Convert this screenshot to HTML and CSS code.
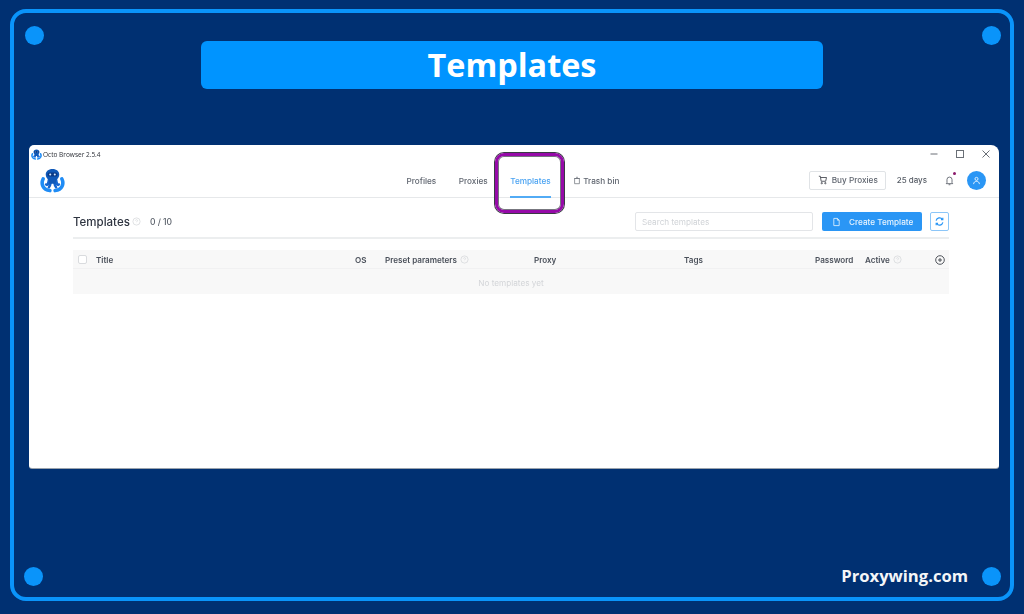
FILE: index.html
```html
<!DOCTYPE html>
<html lang="en">
<head>
<meta charset="utf-8">
<title>Templates</title>
<link rel="stylesheet" href="styles.css">
</head>
<body>
<div class="frame">
  <span class="dot dot-tl"></span><span class="dot dot-tr"></span><span class="dot dot-bl"></span><span class="dot dot-br"></span>
  <h1 class="banner">Templates</h1>
  <div class="window">
    <div class="titlebar">
      <svg class="mini-logo" viewBox="0 0 24 24"><use href="#octo"/></svg>
      <span class="app-name">Octo Browser 2.5.4</span>
      <div class="win-controls">
        <svg viewBox="0 0 10 10"><path d="M1.500 5h7" /></svg>
        <svg viewBox="0 0 10 10"><rect x="1.500" y="1.500" width="7" height="7"/></svg>
        <svg viewBox="0 0 10 10"><path d="M1.500 1.500l7 7M8.500 1.500l-7 7"/></svg>
      </div>
    </div>
    <header class="appbar">
      <div class="logo-cell">
        <svg class="logo" viewBox="0 0 24 24">
          <defs>
            <g id="octo" fill="none" stroke-linecap="round">
              <path stroke="#1f8cf5" stroke-width="3.400" d="M3 10.500C.8 15 2.500 21 9.500 21.700M21 10.500C23.200 15 21.500 21 14.500 21.700"/>
              <path stroke="#1565cf" stroke-width="2.400" d="M8.500 11.500C8 15.500 7 17 5.800 15.800M15.500 11.500C16 15.500 17 17 18.200 15.800M10.500 13C10 16 9.500 17.500 8.500 18.500M13.500 13C14 16 14.500 17.500 15.500 18.500"/>
              <path fill="#1059b8" d="M12 1c3.900 0 6.500 2.300 6.500 5.300 0 2.500-1.400 4.200-3 5.200L15 15H9l-.5-3.500C6.900 10.500 5.500 8.800 5.500 6.300 5.500 3.300 8.100 1 12 1z"/>
              <rect fill="#0a3a86" x="7.200" y="4.400" width="9.600" height="3.800" rx="1.700"/>
              <circle fill="#d8ebff" cx="9.800" cy="6.300" r="1"/>
              <circle fill="#d8ebff" cx="14.200" cy="6.300" r="1"/>
            </g>
          </defs>
          <use href="#octo"/>
        </svg>
      </div>
      <nav class="tabs">
        <a class="tab">Profiles</a>
        <a class="tab">Proxies</a>
        <a class="tab tab-active">Templates</a>
        <a class="tab tab-icon">
          <svg class="ico-trash" viewBox="0 0 10 10"><path d="M2 2.500h6V9H2zM1.500 2.500h7M3.800 1h2.400"/></svg>
          Trash bin
        </a>
      </nav>
      <div class="account">
        <button class="btn-outline">
          <svg class="ico-cart" viewBox="0 0 12 12"><path d="M1 1.500h1.800l1 6h5.400l1-4.500H3.200"/><circle cx="4.500" cy="9.800" r=".8"/><circle cx="8.800" cy="9.800" r=".8"/></svg>
          Buy Proxies
        </button>
        <span class="days">25 days</span>
        <span class="bell">
          <svg viewBox="0 0 10 12"><path d="M2.200 8.500V5a2.800 2.800 0 0 1 5.600 0v3.500l.8 1H1.400zM4 10.700h2"/></svg>
          <i class="bell-dot"></i>
        </span>
        <span class="avatar">
          <svg viewBox="0 0 10 10"><circle cx="5" cy="3.200" r="1.700"/><path d="M1.800 9c0-2 1.400-3 3.200-3s3.200 1 3.200 3"/></svg>
        </span>
      </div>
    </header>
    <main class="content">
      <div class="toolbar">
        <h2 class="page-title">Templates</h2>
        <svg class="ico-help ico-help-title" viewBox="0 0 10 10"><circle cx="5" cy="5" r="4"/><path d="M3.800 4c.2-1.400 2.400-1.300 2.400 0 0 .9-1.200.9-1.200 1.800M5 7.200v.1"/></svg>
        <span class="count">0 / 10</span>
        <div class="search">Search templates</div>
        <button class="btn-primary">
          <svg class="ico-doc" viewBox="0 0 10 10"><path d="M2 1h4l2 2v6H2zM6 1v2h2"/></svg>
          Create Template
        </button>
        <button class="btn-refresh">
          <svg viewBox="0 0 12 12"><path d="M2.300 5a3.900 3.900 0 0 1 6.900-1.400M9.700 7a3.900 3.900 0 0 1-6.900 1.400"/><path d="M9.600 1.900v2H7.600M2.400 10.100v-2h2"/></svg>
        </button>
      </div>
      <div class="table">
        <div class="thead">
          <span class="checkbox"></span>
          <span>Title</span>
          <span>OS</span>
          <span class="th-help">Preset parameters
            <svg class="ico-help" viewBox="0 0 10 10"><circle cx="5" cy="5" r="4"/><path d="M3.800 4c.2-1.400 2.400-1.300 2.400 0 0 .9-1.200.9-1.200 1.800M5 7.200v.1"/></svg>
          </span>
          <span>Proxy</span>
          <span>Tags</span>
          <span>Password</span>
          <span class="th-help">Active
            <svg class="ico-help" viewBox="0 0 10 10"><circle cx="5" cy="5" r="4"/><path d="M3.800 4c.2-1.400 2.400-1.300 2.400 0 0 .9-1.200.9-1.200 1.800M5 7.200v.1"/></svg>
          </span>
          <svg class="ico-plus" viewBox="0 0 10 10"><circle cx="5" cy="5" r="4.300"/><path d="M3 5h4M5 3v4"/></svg>
        </div>
        <div class="empty">No templates yet</div>
      </div>
    </main>
    <span class="highlight"></span>
  </div>
  <div class="brand">Proxywing.com</div>
</div>
</body>
</html>
```

FILE: styles.css
```css
* { box-sizing: border-box; }
html, body { margin: 0; height: 100%; }
body {
  background: #003072;
  padding: 9px 10px 0;
  overflow: hidden;
  font-family: Inter, "Liberation Sans", sans-serif;
}
svg { display: block; }

.frame {
  position: relative;
  height: 592px;
  border: 4px solid #0a94fa;
  border-radius: 16px;
  padding: 28px 15px 0;
}
.dot {
  position: absolute;
  width: 19px;
  height: 19px;
  border-radius: 50%;
  background: #0a94fa;
}
.dot-tl { left: 11px; top: 13px; }
.dot-tr { right: 9px; top: 13px; }
.dot-bl { left: 10px; bottom: 11px; }
.dot-br { right: 9px; bottom: 11px; }

.banner {
  width: 622px;
  height: 48px;
  margin: 0 0 56px 172px;
  border-radius: 6px;
  background: #0094ff;
  color: #fff;
  font: 700 32.400px/47px "Open Sans", sans-serif;
  text-align: center;
}

.window {
  position: relative;
  width: 970px;
  height: 323px;
  background: #fff;
  border-radius: 5px 8px 3px 3px;
  box-shadow: 0 1px 0 #9aa3ad;
  filter: blur(.3px);
}
.titlebar {
  display: flex;
  align-items: center;
  height: 18px;
  padding: 0 8px 0 2px;
}
.mini-logo { width: 11px; height: 11px; }
.app-name {
  margin-left: 1px;
  font: 400 6.500px "Open Sans", sans-serif;
  color: #2c2f36;
}
.win-controls {
  display: flex;
  gap: 16px;
  margin-left: auto;
}
.win-controls svg {
  width: 10px;
  height: 10px;
  fill: none;
  stroke: #6a6f76;
  stroke-width: 1;
}

.appbar {
  display: grid;
  grid-template-columns: 1fr auto 1fr;
  align-items: stretch;
  height: 35px;
  border-bottom: 1px solid #e6e8ea;
}
.logo-cell { display: flex; align-items: center; padding-left: 11px; }
.logo { width: 25px; height: 25px; }
.tabs { display: flex; gap: 22.500px; margin-right: 2px; }
.tab {
  display: flex;
  align-items: center;
  gap: 2px;
  padding-top: 2px;
  font-size: 8.200px;
  font-weight: 500;
  color: #5f656f;
  border-bottom: 1px solid transparent;
}
.tab-active {
  color: #4aa3f2;
  border-bottom: 2px solid #52abf5;
  margin-bottom: -1px;
}
.ico-trash {
  width: 8px;
  height: 9px;
  fill: none;
  stroke: #6a7078;
  stroke-width: .9;
}
.account {
  display: flex;
  align-items: center;
  justify-content: flex-end;
  padding-right: 13px;
}
.btn-outline {
  display: flex;
  align-items: center;
  gap: 4px;
  width: 77px;
  height: 19px;
  padding: 0 0 0 8px;
  background: #fff;
  border: 1px solid #e0e3e6;
  border-radius: 2px;
  font: 500 8.200px Inter, sans-serif;
  color: #5f656f;
}
.ico-cart {
  width: 10px;
  height: 10px;
  fill: none;
  stroke: #3c4048;
  stroke-width: 1;
}
.days {
  margin-left: 11px;
  font-size: 8px;
  font-weight: 500;
  color: #565c65;
}
.bell {
  position: relative;
  width: 9px;
  margin-left: 18px;
}
.bell svg {
  width: 9px;
  height: 11px;
  fill: none;
  stroke: #50565f;
  stroke-width: .9;
}
.bell-dot {
  position: absolute;
  right: -2px;
  top: -3px;
  width: 3px;
  height: 3px;
  border-radius: 50%;
  background: #8b1a6b;
}
.avatar {
  display: flex;
  align-items: center;
  justify-content: center;
  width: 19px;
  height: 19px;
  margin-left: 13px;
  border-radius: 50%;
  background: #2a96f5;
}
.avatar svg {
  width: 9px;
  height: 9px;
  fill: none;
  stroke: #fff;
  stroke-width: .9;
}

.content { padding: 12px 50px 0 44px; }
.toolbar {
  display: flex;
  align-items: center;
  height: 29px;
  padding-bottom: 4px;
  border-bottom: 2px solid #eceeef;
}
.page-title {
  margin: 0;
  font-size: 11.500px;
  font-weight: 500;
  color: #2e3440;
}
.ico-help {
  width: 9px;
  height: 9px;
  fill: none;
  stroke: #d4d7da;
  stroke-width: .8;
}
.ico-help-title { margin-left: 2px; }
.count {
  margin-left: 9px;
  font-size: 8.500px;
  font-weight: 500;
  color: #5a606a;
}
.search {
  display: flex;
  align-items: center;
  width: 178px;
  height: 19px;
  margin-left: auto;
  padding-left: 6px;
  border: 1px solid #e3e5e8;
  border-radius: 2px;
  font-size: 8.200px;
  color: #d0d3d7;
}
.btn-primary {
  display: flex;
  align-items: center;
  width: 100px;
  height: 19px;
  margin-left: 9px;
  padding: 0 0 0 10px;
  gap: 8px;
  border: 0;
  border-radius: 2px;
  background: #2a96f5;
  color: #e8f4fe;
  font: 500 8.200px Inter, sans-serif;
}
.ico-doc {
  width: 9px;
  height: 10px;
  fill: none;
  stroke: #e8f4fe;
  stroke-width: .9;
}
.btn-refresh {
  display: flex;
  align-items: center;
  justify-content: center;
  width: 19px;
  height: 19px;
  margin-left: 8px;
  padding: 0;
  background: #fff;
  border: 1px solid #8cc6f8;
  border-radius: 2px;
}
.btn-refresh svg {
  width: 11px;
  height: 11px;
  fill: none;
  stroke: #2a96f5;
  stroke-width: 1.300;
}

.table { margin-top: 11px; }
.thead {
  display: grid;
  grid-template-columns: 23px 259px 30px 149px 150px 131px 50px 70px 1fr;
  align-items: center;
  height: 19px;
  padding-top: 1px;
  background: #f8f8f8;
  border-bottom: 1px solid #f1f1f2;
  font-size: 8.100px;
  font-weight: 600;
  color: #4a505a;
}
.checkbox {
  width: 9px;
  height: 9px;
  margin-left: 5px;
  background: #fff;
  border: 1px solid #d9dbde;
  border-radius: 2px;
}
.th-help { display: flex; align-items: center; gap: 3px; }
.ico-plus {
  width: 10px;
  height: 10px;
  fill: none;
  stroke: #3e434b;
  stroke-width: .9;
}
.empty {
  height: 25px;
  background: #f8f8f8;
  font-size: 8.200px;
  line-height: 28px;
  text-align: center;
  color: #d3d5d8;
}

.highlight {
  position: absolute;
  left: 466px;
  top: 8px;
  width: 69px;
  height: 60px;
  border: 3px solid #960aa8;
  border-radius: 9px;
  box-shadow: 0 0 0 1px #3a3a44, inset 0 0 0 1px #77777f;
}

.brand {
  position: absolute;
  right: 42px;
  bottom: 9px;
  font: 700 16.600px/24px "Open Sans", sans-serif;
  color: #f4f6f8;
}
```
